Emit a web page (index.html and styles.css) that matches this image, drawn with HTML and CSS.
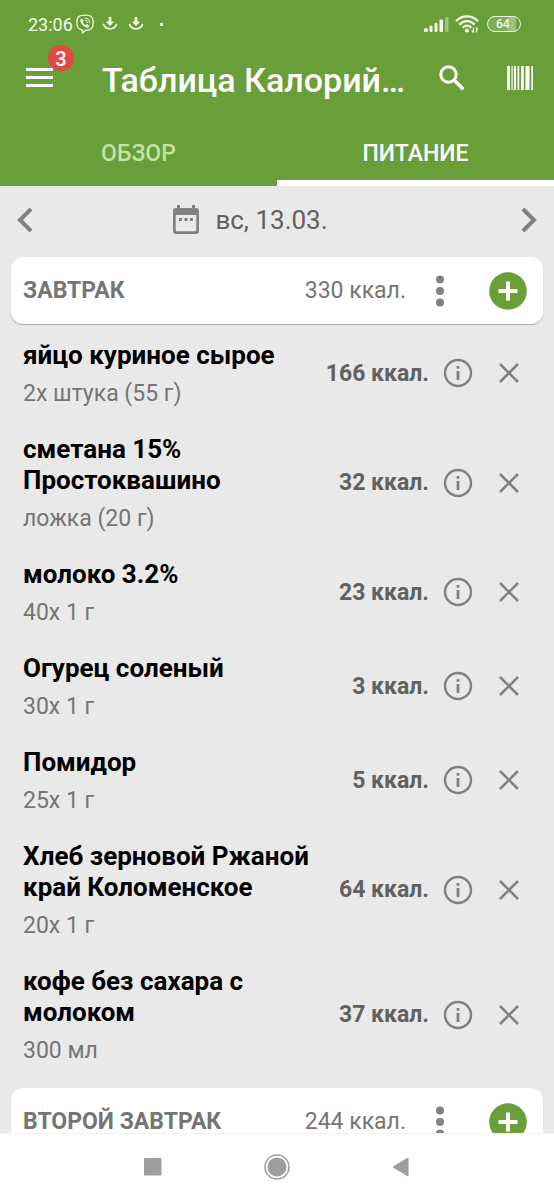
FILE: index.html
```html
<!DOCTYPE html>
<html lang="ru">
<head>
<meta charset="utf-8">
<meta name="viewport" content="width=device-width, initial-scale=1">
<title>Таблица Калорийности</title>
<link rel="stylesheet" href="styles.css">
</head>
<body>
<svg width="0" height="0" class="sprite" aria-hidden="true">
  <symbol id="download" viewBox="0 0 16 16">
    <path d="M6.600 1h2.800v4.500h2.800L8 10 3.800 5.500h2.800z" fill="currentColor"/>
    <path d="M1.500 8.500C4 14.300 12 14.300 14.500 8.500" fill="none" stroke="currentColor" stroke-width="1.800" stroke-linecap="round"/>
  </symbol>
  <symbol id="info" viewBox="0 0 30 30">
    <circle cx="15" cy="15" r="13" fill="none" stroke="currentColor" stroke-width="2.400"/>
    <path d="M13.600 8h2.800v2.800h-2.800zM13.600 13h2.800v9h-2.800z" fill="currentColor"/>
  </symbol>
  <symbol id="cross" viewBox="0 0 20 20">
    <path d="M1 1l18 18M19 1L1 19" stroke="currentColor" stroke-width="2.500"/>
  </symbol>
  <symbol id="dots" viewBox="0 0 10 32">
    <circle cx="5" cy="4.500" r="4"/><circle cx="5" cy="16" r="4"/><circle cx="5" cy="27.500" r="4"/>
  </symbol>
  <symbol id="plus" viewBox="0 0 38 38">
    <circle cx="19" cy="19" r="18.800" fill="#689f38"/>
    <path d="M19 9.500v19M9.500 19h19" stroke="#fff" stroke-width="4"/>
  </symbol>
</svg>
<div class="screen">
  <header class="header">
    <div class="status">
      <span class="clock">23:06</span>
      <svg class="viber" viewBox="0 0 20 20" fill="none" stroke="currentColor" stroke-width="1.300" stroke-linecap="round" stroke-linejoin="round">
        <path d="M10 1.200c6.200 0 8.200 1.800 8.200 7.500s-2 7.500-7.400 7.600L7.500 19v-3C3.200 15.300 1.800 13.500 1.800 8.700 1.800 3 3.800 1.200 10 1.200z"/>
        <path d="M5.500 5.200l1.300-.9 1.800 2.500-.9 1.200c.6 1.500 1.500 2.400 3 3l1.200-.9 2.500 1.800-.9 1.500c-1 .7-2.200.3-3.600-.6-2.200-1.300-3.600-3-4.400-5.200-.3-1-.4-1.700 0-2.400z" fill="currentColor" stroke="none"/>
        <path d="M10.200 4.200c2.800 0 4.400 1.700 4.400 4.500M10.400 6.300c1.400.1 2.100.9 2.200 2.300" stroke-width="1"/>
      </svg>
      <svg class="load"><use href="#download"/></svg>
      <svg class="load"><use href="#download"/></svg>
      <span class="dot"></span>
      <svg class="signal" viewBox="0 0 25 16" fill="currentColor">
        <rect x="0" y="12" width="4" height="4" rx="1.500"/><rect x="5.500" y="9.500" width="3" height="6.500" rx="1"/><rect x="10.500" y="7" width="3" height="9" rx="1"/><rect x="15.500" y="3.500" width="3.500" height="12.500" rx="1"/><rect x="21" y="1" width="3.500" height="15" rx="1" opacity=".4"/>
      </svg>
      <svg class="wifi" viewBox="0 0 24 18" fill="none" stroke="currentColor" stroke-width="2.300">
        <path d="M1 6.300C7-.2 17-.2 23 6.300M4.300 9.600c4.300-4.700 11.100-4.700 15.400 0M7.600 12.800c2.600-2.800 6.200-2.800 8.800 0"/>
        <circle cx="12" cy="15.500" r="2" fill="currentColor" stroke="none"/>
        <path d="M18.500 12.500v5M16.700 15.500l1.800 2M21.500 17.500v-5M23 14.500l-1.500-2" stroke-width="1.200"/>
      </svg>
      <span class="battery">64</span>
    </div>
    <div class="toolbar">
      <button class="icon-button menu" aria-label="Меню">
        <svg class="burger" viewBox="0 0 28 20"><path d="M1 1.500h27M1 9.500h27M1 17.500h27" stroke="currentColor" stroke-width="3"/></svg>
        <span class="badge">3</span>
      </button>
      <h1 class="title">Таблица Калорий…</h1>
      <button class="icon-button search" aria-label="Поиск">
        <svg viewBox="0 0 26 26" fill="none" stroke="currentColor"><circle cx="9.500" cy="9.500" r="7.700" stroke-width="3"/><path d="M15 15l9.300 9.300" stroke-width="3.600"/></svg>
      </button>
      <button class="icon-button barcode" aria-label="Штрихкод">
        <svg viewBox="0 0 26 26" fill="currentColor"><path d="M0 1h3v24H0zM4.500 1h1.200v24H4.500zM7 1h2v24H7zM10.500 1h1.700v24h-1.700zM14 1h2.800v24H14zM18.500 1h4v24h-4zM24.300 1H26v24h-1.700z"/></svg>
      </button>
    </div>
    <div class="tabs" role="tablist">
      <button class="tab" role="tab" aria-selected="false">ОБЗОР</button>
      <button class="tab tab-active" role="tab" aria-selected="true">ПИТАНИЕ</button>
    </div>
  </header>

  <main class="content">
    <div class="datebar">
      <button class="icon-button" aria-label="Предыдущий день"><svg class="chevron" viewBox="0 0 16 26"><path d="M14 2L3 13l11 11" fill="none" stroke="currentColor" stroke-width="4"/></svg></button>
      <button class="date">
        <svg class="calendar" viewBox="0 0 26 29"><path d="M4 0h3v3h12V0h3v3h1a3 3 0 0 1 3 3v20a3 3 0 0 1-3 3H3a3 3 0 0 1-3-3V6a3 3 0 0 1 3-3h1zM2.700 10v15.300a1 1 0 0 0 1 1h18.600a1 1 0 0 0 1-1V10z" fill="currentColor" fill-rule="evenodd"/><path d="M6 13h3v3H6zM11.500 13h3v3h-3zM17 13h3v3h-3z" fill="currentColor"/></svg>
        <span>вс, 13.03.</span>
      </button>
      <button class="icon-button" aria-label="Следующий день"><svg class="chevron" viewBox="0 0 16 26"><path d="M2 2l11 11L2 24" fill="none" stroke="currentColor" stroke-width="4"/></svg></button>
    </div>

    <section class="meal">
      <div class="card">
        <h2 class="meal-name">ЗАВТРАК</h2>
        <span class="meal-kcal">330 ккал.</span>
        <button class="icon-button more" aria-label="Ещё"><svg><use href="#dots"/></svg></button>
        <button class="icon-button add" aria-label="Добавить"><svg><use href="#plus"/></svg></button>
      </div>
      <ul class="foods">
        <li class="food">
          <div class="about"><h3 class="name">яйцо куриное сырое</h3><p class="amount">2x штука (55 г)</p></div>
          <span class="kcal">166 ккал.</span>
          <button class="icon-button info" aria-label="Информация"><svg><use href="#info"/></svg></button>
          <button class="icon-button remove" aria-label="Удалить"><svg><use href="#cross"/></svg></button>
        </li>
        <li class="food">
          <div class="about"><h3 class="name">сметана 15% Простоквашино</h3><p class="amount">ложка (20 г)</p></div>
          <span class="kcal">32 ккал.</span>
          <button class="icon-button info" aria-label="Информация"><svg><use href="#info"/></svg></button>
          <button class="icon-button remove" aria-label="Удалить"><svg><use href="#cross"/></svg></button>
        </li>
        <li class="food">
          <div class="about"><h3 class="name">молоко 3.2%</h3><p class="amount">40x 1 г</p></div>
          <span class="kcal">23 ккал.</span>
          <button class="icon-button info" aria-label="Информация"><svg><use href="#info"/></svg></button>
          <button class="icon-button remove" aria-label="Удалить"><svg><use href="#cross"/></svg></button>
        </li>
        <li class="food">
          <div class="about"><h3 class="name">Огурец соленый</h3><p class="amount">30x 1 г</p></div>
          <span class="kcal">3 ккал.</span>
          <button class="icon-button info" aria-label="Информация"><svg><use href="#info"/></svg></button>
          <button class="icon-button remove" aria-label="Удалить"><svg><use href="#cross"/></svg></button>
        </li>
        <li class="food">
          <div class="about"><h3 class="name">Помидор</h3><p class="amount">25x 1 г</p></div>
          <span class="kcal">5 ккал.</span>
          <button class="icon-button info" aria-label="Информация"><svg><use href="#info"/></svg></button>
          <button class="icon-button remove" aria-label="Удалить"><svg><use href="#cross"/></svg></button>
        </li>
        <li class="food">
          <div class="about"><h3 class="name">Хлеб зерновой Ржаной край Коломенское</h3><p class="amount">20x 1 г</p></div>
          <span class="kcal">64 ккал.</span>
          <button class="icon-button info" aria-label="Информация"><svg><use href="#info"/></svg></button>
          <button class="icon-button remove" aria-label="Удалить"><svg><use href="#cross"/></svg></button>
        </li>
        <li class="food">
          <div class="about"><h3 class="name">кофе без сахара с молоком</h3><p class="amount">300 мл</p></div>
          <span class="kcal">37 ккал.</span>
          <button class="icon-button info" aria-label="Информация"><svg><use href="#info"/></svg></button>
          <button class="icon-button remove" aria-label="Удалить"><svg><use href="#cross"/></svg></button>
        </li>
      </ul>
    </section>

    <section class="meal">
      <div class="card">
        <h2 class="meal-name">ВТОРОЙ ЗАВТРАК</h2>
        <span class="meal-kcal">244 ккал.</span>
        <button class="icon-button more" aria-label="Ещё"><svg><use href="#dots"/></svg></button>
        <button class="icon-button add" aria-label="Добавить"><svg><use href="#plus"/></svg></button>
      </div>
    </section>
  </main>

  <nav class="navbar">
    <button class="icon-button" aria-label="Недавние"><svg viewBox="0 0 28 28"><rect x="5" y="5" width="17.500" height="17.500" rx="1" fill="currentColor"/></svg></button>
    <button class="icon-button" aria-label="Домой"><svg viewBox="0 0 28 28"><circle cx="14" cy="14" r="12" fill="none" stroke="currentColor" stroke-width="1.500"/><circle cx="14" cy="14" r="9.500" fill="currentColor"/></svg></button>
    <button class="icon-button" aria-label="Назад"><svg viewBox="0 0 28 28"><path d="M6 14L21 5v18z" fill="currentColor" stroke="currentColor" stroke-linejoin="round"/></svg></button>
  </nav>
</div>
</body>
</html>
```
FILE: styles.css
```css
* {
  box-sizing: border-box;
}

body {
  margin: 0;
  font-family: Roboto, "Noto Sans", sans-serif;
  color: #757575;
  background: #e9e9e9;
}

h1, h2, h3, p, ul {
  margin: 0;
  padding: 0;
}

button {
  border: 0;
  padding: 0;
  background: none;
  color: inherit;
  font: inherit;
}

svg {
  display: block;
}

.sprite {
  position: absolute;
}

.screen {
  display: flex;
  flex-direction: column;
  height: 100vh;
}

.icon-button {
  display: flex;
  align-items: center;
  justify-content: center;
  flex: none;
}

/* Header */
.header {
  flex: none;
  background: #689f38;
  color: #fff;
}

.status {
  display: flex;
  align-items: center;
  height: 48px;
  padding: 0 33px 0 28px;
  color: #f0fae6;
}

.clock {
  font-size: 18px;
}

.viber {
  width: 20px;
  height: 20px;
  margin: 0 7px 0 2px;
}

.load {
  width: 16px;
  height: 16px;
  margin-right: 10px;
}

.dot {
  width: 3px;
  height: 3px;
  margin-left: 6px;
  background: currentColor;
}

.signal {
  width: 25px;
  height: 16px;
  margin-left: auto;
}

.wifi {
  width: 24px;
  height: 18px;
  margin: 0 8px 0 6px;
}

.battery {
  width: 34px;
  height: 16px;
  border: 1px solid currentColor;
  border-radius: 8px;
  background: linear-gradient(90deg, #7dad53 64%, #9cc17a 64%, #9cc17a 88%, transparent 88%);
  font-size: 12px;
  font-weight: 500;
  line-height: 15px;
  padding-left: 8px;
}

.toolbar {
  display: flex;
  align-items: center;
  height: 64px;
  padding: 0 21px 4px 25px;
}

.menu {
  position: relative;
}

.burger {
  width: 28px;
  height: 20px;
}

.badge {
  position: absolute;
  left: 23px;
  bottom: 17px;
  width: 26px;
  height: 26px;
  border-radius: 50%;
  background: #e04a3f;
  font-size: 20px;
  font-weight: 500;
  line-height: 28px;
  text-align: center;
}

.title {
  flex: 1;
  margin: 4px 0 0 49px;
  font-size: 34px;
  font-weight: 500;
  line-height: 44px;
  white-space: nowrap;
}

.search svg, .barcode svg {
  width: 26px;
  height: 26px;
}

.barcode {
  margin-left: 42px;
}

.tabs {
  display: flex;
  margin-top: 12px;
}

.tab {
  flex: 1;
  height: 62px;
  border-top: 6px solid transparent;
  border-bottom: 6px solid transparent;
  padding-bottom: 4px;
  font-size: 23px;
  font-weight: 500;
  color: #c5e1a5;
}

.tab-active {
  border-bottom-color: #fff;
  color: #fff;
}

/* Diary */
.content {
  flex: 1;
  min-height: 0;
  overflow: hidden;
  padding: 0 11px;
}

.datebar {
  display: flex;
  align-items: center;
  justify-content: space-between;
  height: 71px;
  padding: 0 6px 4px;
  color: #808080;
}

.chevron {
  width: 16px;
  height: 26px;
}

.date {
  display: flex;
  align-items: center;
  gap: 16px;
  margin-right: 53px;
  font-size: 26px;
  color: #616161;
}

.calendar {
  width: 26px;
  height: 29px;
  color: #808080;
}

.card {
  display: flex;
  align-items: center;
  height: 67px;
  padding: 0 16px 0 12px;
  border-radius: 12px;
  background: #fff;
  box-shadow: 0 1px 1px #a8a8a8;
}

.meal-name {
  flex: 1;
  font-size: 23px;
  font-weight: 700;
  line-height: 23px;
}

.meal-kcal {
  font-size: 23px;
  line-height: 23px;
}

.more {
  margin: 0 44px 0 29px;
  fill: #808080;
}

.more svg {
  width: 10px;
  height: 32px;
}

.add svg {
  width: 38px;
  height: 38px;
}

.foods {
  list-style: none;
  padding: 2px 0 11px;
}

.food {
  display: flex;
  align-items: center;
  padding: 12px 24px 12px 12px;
}

.about {
  flex: 1;
  max-width: 292px;
  margin-right: auto;
  padding-top: 2px;
}

.name {
  font-size: 26px;
  font-weight: 700;
  line-height: 31px;
  color: #000;
}

.amount {
  margin-top: 8px;
  font-size: 23px;
  line-height: 29px;
}

.kcal {
  font-size: 23px;
  font-weight: 700;
  color: #616161;
}

.info {
  margin: 0 26px 0 14px;
}

.info svg {
  width: 30px;
  height: 30px;
}

.info, .remove {
  color: #808080;
}

.remove svg {
  width: 20px;
  height: 20px;
}

/* System navigation */
.navbar {
  display: flex;
  flex: none;
  align-items: center;
  justify-content: center;
  gap: 96px;
  height: 67px;
  border-top: 1px solid #f2f2f2;
  background: #fff;
  color: #9e9e9e;
}

.navbar svg {
  width: 28px;
  height: 28px;
}
```
